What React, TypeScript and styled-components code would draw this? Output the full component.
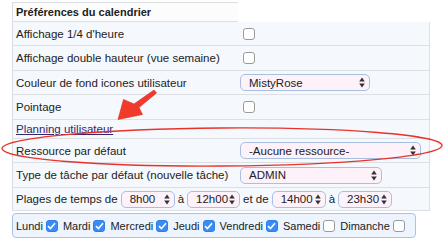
import styled, { createGlobalStyle } from "styled-components";

const GlobalStyle = createGlobalStyle`
  body {
    margin: 0;
    background: #ffffff;
    font-family: "Liberation Sans", Arial, sans-serif;
    font-size: 11.5px;
    color: #222222;
  }
`;

const Page = styled.div`
  position: relative;
  width: 444px;
  height: 251px;
  padding: 2px 0 0 12px;
  box-sizing: border-box;
  overflow: hidden;
`;

const Table = styled.div`
  width: 417px;
  border-left: 1px solid #d8dbe0;
`;

const HeaderCell = styled.div`
  width: 225px;
  height: 20px;
  box-sizing: border-box;
  border-top: 1px solid #dcdfe3;
  border-bottom: 1px solid #dcdfe3;
  padding-left: 3px;
  display: flex;
  align-items: center;
  font-weight: bold;
  font-size: 11px;
  background: #fcfcfd;
`;

const Body = styled.div`
  background: #f5f8fd;
  border-right: 1px solid #dcdfe3;
`;

const Row = styled.div<{ $h: number }>`
  display: grid;
  grid-template-columns: 224px 1fr;
  height: ${(p) => p.$h}px;
  box-sizing: border-box;
  border-bottom: 1px solid #dcdfe3;
`;

const WideRow = styled(Row)`
  grid-template-columns: 1fr;
`;

const Label = styled.div`
  display: flex;
  align-items: center;
  padding-left: 3px;
  white-space: nowrap;
`;

const Value = styled.div`
  display: flex;
  align-items: center;
  padding-left: 3px;
`;

const Link = styled.a`
  color: #36246e;
  text-decoration: underline;
`;

const Box = styled.span<{ $checked?: boolean }>`
  display: inline-flex;
  align-items: center;
  justify-content: center;
  flex: none;
  width: 12px;
  height: 12px;
  box-sizing: border-box;
  border-radius: 3px;
  border: 1px solid ${(p) => (p.$checked ? "#2f7fe8" : "#9b9b9b")};
  background: ${(p) => (p.$checked ? "#3a8cf4" : "#ffffff")};
`;

const FieldBox = styled.span`
  display: inline-flex;
  margin-left: 3px;
`;

const SelectBox = styled.div<{ $w: number }>`
  display: flex;
  align-items: center;
  justify-content: space-between;
  flex: none;
  width: ${(p) => p.$w}px;
  height: 17px;
  box-sizing: border-box;
  padding: 0 4px 0 8px;
  border: 1px solid #a9bfe2;
  border-radius: 5px;
  background: #fdf1fa;
  white-space: nowrap;
  overflow: hidden;
`;

const TimeLine = styled.div`
  display: flex;
  align-items: center;
  gap: 3px;
  padding-left: 3px;
  white-space: nowrap;
`;

const Days = styled.div`
  display: flex;
  align-items: center;
  width: 404px;
  height: 25px;
  margin-top: 2px;
  box-sizing: border-box;
  padding-left: 3px;
  border: 1px solid #a8c3ea;
  border-radius: 4px;
  background: #edf4fe;
  font-size: 11px;
`;

const Day = styled.span`
  display: inline-flex;
  align-items: center;
  gap: 3px;
  margin-right: 5px;
`;

const Overlay = styled.svg`
  position: absolute;
  left: 0;
  top: 0;
  pointer-events: none;
`;

const Check = ({ checked }: { checked?: boolean }) => (
  <Box $checked={checked}>
    {checked && (
      <svg width="9" height="8" viewBox="0 0 9 8">
        <path d="M1 4.2 L3.4 6.5 L8 1.2" fill="none" stroke="#fff" strokeWidth="1.6" />
      </svg>
    )}
  </Box>
);

const Select = ({ w, children }: { w: number; children: string }) => (
  <SelectBox $w={w}>
    <span>{children}</span>
    <svg width="6" height="11" viewBox="0 0 6 11">
      <path d="M3 0.5 L5.8 4.5 L0.2 4.5 Z M3 10.5 L5.8 6.5 L0.2 6.5 Z" fill="#333" />
    </svg>
  </SelectBox>
);

const days: [string, boolean][] = [
  ["Lundi", true],
  ["Mardi", true],
  ["Mercredi", true],
  ["Jeudi", true],
  ["Vendredi", true],
  ["Samedi", false],
  ["Dimanche", false],
];

export default function App() {
  return (
    <>
      <GlobalStyle />
      <Page>
        <Table>
          <HeaderCell>Préférences du calendrier</HeaderCell>
          <Body>
            <Row $h={24}>
              <Label>Affichage 1/4 d'heure</Label>
              <Value>
                <FieldBox>
                  <Check />
                </FieldBox>
              </Value>
            </Row>
            <Row $h={25}>
              <Label>Affichage double hauteur (vue semaine)</Label>
              <Value>
                <FieldBox>
                  <Check />
                </FieldBox>
              </Value>
            </Row>
            <Row $h={24}>
              <Label>Couleur de fond icones utilisateur</Label>
              <Value>
                <Select w={130}>MistyRose</Select>
              </Value>
            </Row>
            <Row $h={25}>
              <Label>Pointage</Label>
              <Value>
                <FieldBox>
                  <Check />
                </FieldBox>
              </Value>
            </Row>
            <Row $h={19}>
              <Label>
                <Link>Planning utilisateur</Link>
              </Label>
              <Value />
            </Row>
            <Row $h={24}>
              <Label>Ressource par défaut</Label>
              <Value>
                <Select w={181}>-Aucune ressource-</Select>
              </Value>
            </Row>
            <Row $h={25}>
              <Label>Type de tâche par défaut (nouvelle tâche)</Label>
              <Value>
                <Select w={142}>ADMIN</Select>
              </Value>
            </Row>
            <WideRow $h={23}>
              <TimeLine>
                Plages de temps de <Select w={54}>8h00</Select> à{" "}
                <Select w={53}>12h00</Select> et de <Select w={54}>14h00</Select> à{" "}
                <Select w={54}>23h30</Select>
              </TimeLine>
            </WideRow>
          </Body>
        </Table>
        <Days>
          {days.map(([d, c]) => (
            <Day key={d}>
              {d}
              <Check checked={c} />
            </Day>
          ))}
        </Days>
        <Overlay width="444" height="251" viewBox="0 0 444 251">
          <ellipse
            cx="222"
            cy="147"
            rx="220"
            ry="19"
            fill="none"
            stroke="#e8332a"
            strokeWidth="1.3"
            transform="rotate(-0.4 222 147)"
          />
          <path
            d="M154 90 L156.5 93 L139 107.5 L142.5 114.5 L118 119.5 L123.5 99.5 L134 104 Z"
            fill="#f23a2a"
            stroke="#d92a1c"
            strokeWidth="0.6"
            strokeLinejoin="round"
          />
        </Overlay>
      </Page>
    </>
  );
}
